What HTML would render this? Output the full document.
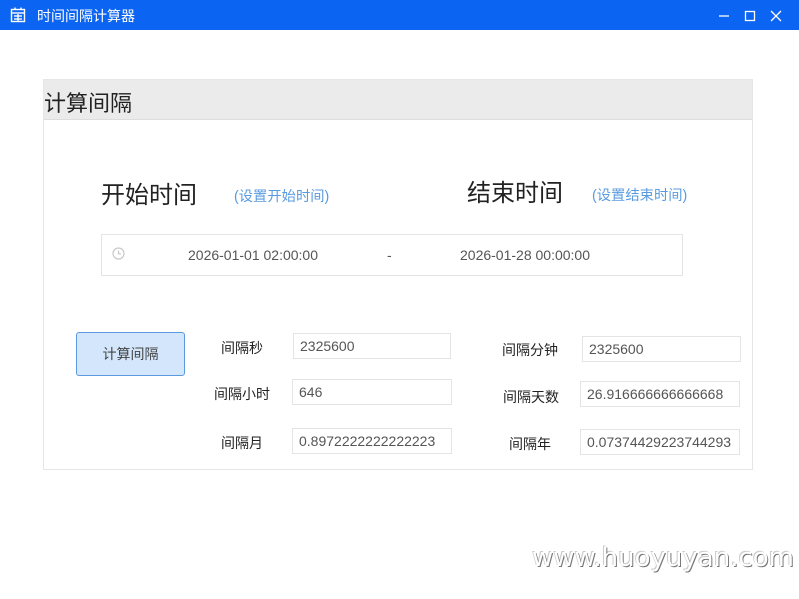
<!DOCTYPE html>
<html><head><meta charset="utf-8"><style>
*{margin:0;padding:0;box-sizing:border-box}
body{width:799px;height:599px;background:#fff;position:relative;overflow:hidden;font-family:"Liberation Sans","Noto Sans CJK SC",sans-serif;color:#333}
.abs{position:absolute}
.tb{left:0;top:0;width:799px;height:30px;background:#0b64f2;color:#fff}
.inp{position:absolute;height:26px;border:1px solid #e4e4e4;background:#fff;font-size:14px;color:#555;line-height:24px;padding-left:6px}
.lbl{position:absolute;font-size:14px;color:#222;white-space:nowrap}
.link{position:absolute;font-size:14px;color:#5a9be0;white-space:nowrap}
</style></head><body>
<div class="abs tb">
 <svg class="abs" style="left:10px;top:7px" width="16" height="16" viewBox="0 0 16 16" fill="none" stroke="#fff" stroke-width="1.4"><rect x="1.5" y="2.5" width="13" height="12"/><line x1="1.5" y1="6" x2="14.5" y2="6"/><line x1="5" y1="0.5" x2="5" y2="3"/><line x1="11" y1="0.5" x2="11" y2="3"/><line x1="4" y1="9" x2="12" y2="9"/><line x1="4" y1="12" x2="12" y2="12"/><line x1="8" y1="7" x2="8" y2="14"/></svg>
 <div class="abs" style="left:37px;top:6px;font-size:14px">时间间隔计算器</div>
 <svg class="abs" style="left:715px;top:9px" width="72" height="14" viewBox="0 0 72 14" stroke="#fff" stroke-width="1.3" fill="none"><line x1="4" y1="7" x2="14" y2="7"/><rect x="30.5" y="2.5" width="9" height="9"/><line x1="56" y1="2" x2="66" y2="12"/><line x1="66" y1="2" x2="56" y2="12"/></svg>
</div>
<div class="abs" style="left:43px;top:79px;width:710px;height:391px;border:1px solid #e6e6e6"></div>
<div class="abs" style="left:44px;top:80px;width:708px;height:40px;background:#ebebeb;border-bottom:1px solid #ddd"></div>
<div class="abs" style="left:44px;top:86px;font-size:22px;color:#222">计算间隔</div>
<div class="abs" style="left:101px;top:175px;font-size:24px;color:#222">开始时间</div>
<div class="link" style="left:234px;top:185px;font-size:14.3px">(设置开始时间)</div>
<div class="abs" style="left:467px;top:173px;font-size:24px;color:#222">结束时间</div>
<div class="link" style="left:592px;top:184px;font-size:14.3px">(设置结束时间)</div>
<div class="abs" style="left:101px;top:234px;width:582px;height:42px;border:1px solid #e4e4e4"></div>
<svg class="abs" style="left:112px;top:247px" width="13" height="13" viewBox="0 0 13 13" fill="none" stroke="#c8c8c8" stroke-width="1.2"><circle cx="6.5" cy="6.5" r="5.5"/><path d="M6.5 3.5V6.8H9"/></svg>
<div class="abs" style="left:188px;top:247px;font-size:14px;color:#555">2026-01-01 02:00:00</div>
<div class="abs" style="left:387px;top:247px;font-size:14px;color:#555">-</div>
<div class="abs" style="left:460px;top:247px;font-size:14px;color:#555">2026-01-28 00:00:00</div>
<div class="abs" style="left:76px;top:332px;width:109px;height:44px;background:#d3e6fc;border:1px solid #5a9be0;border-radius:3px;font-size:14px;color:#444;text-align:center;line-height:42px">计算间隔</div>
<div class="lbl" style="left:221px;top:338px">间隔秒</div>
<div class="inp" style="left:293px;top:333px;width:158px">2325600</div>
<div class="lbl" style="left:214px;top:384px">间隔小时</div>
<div class="inp" style="left:292px;top:379px;width:160px">646</div>
<div class="lbl" style="left:221px;top:433px">间隔月</div>
<div class="inp" style="left:292px;top:428px;width:160px">0.8972222222222223</div>
<div class="lbl" style="left:502px;top:340px">间隔分钟</div>
<div class="inp" style="left:582px;top:336px;width:159px">2325600</div>
<div class="lbl" style="left:503px;top:387px">间隔天数</div>
<div class="inp" style="left:580px;top:381px;width:160px">26.916666666666668</div>
<div class="lbl" style="left:509px;top:434px">间隔年</div>
<div class="inp" style="left:580px;top:429px;width:160px">0.07374429223744293</div>
<div class="abs" style="left:532px;top:543px;font-family:'DejaVu Sans',sans-serif;font-size:26px;color:#fff;text-shadow:1px 1px 0 #777,-1px -1px 0 #ccc">www.huoyuyan.com</div>
</body></html>
